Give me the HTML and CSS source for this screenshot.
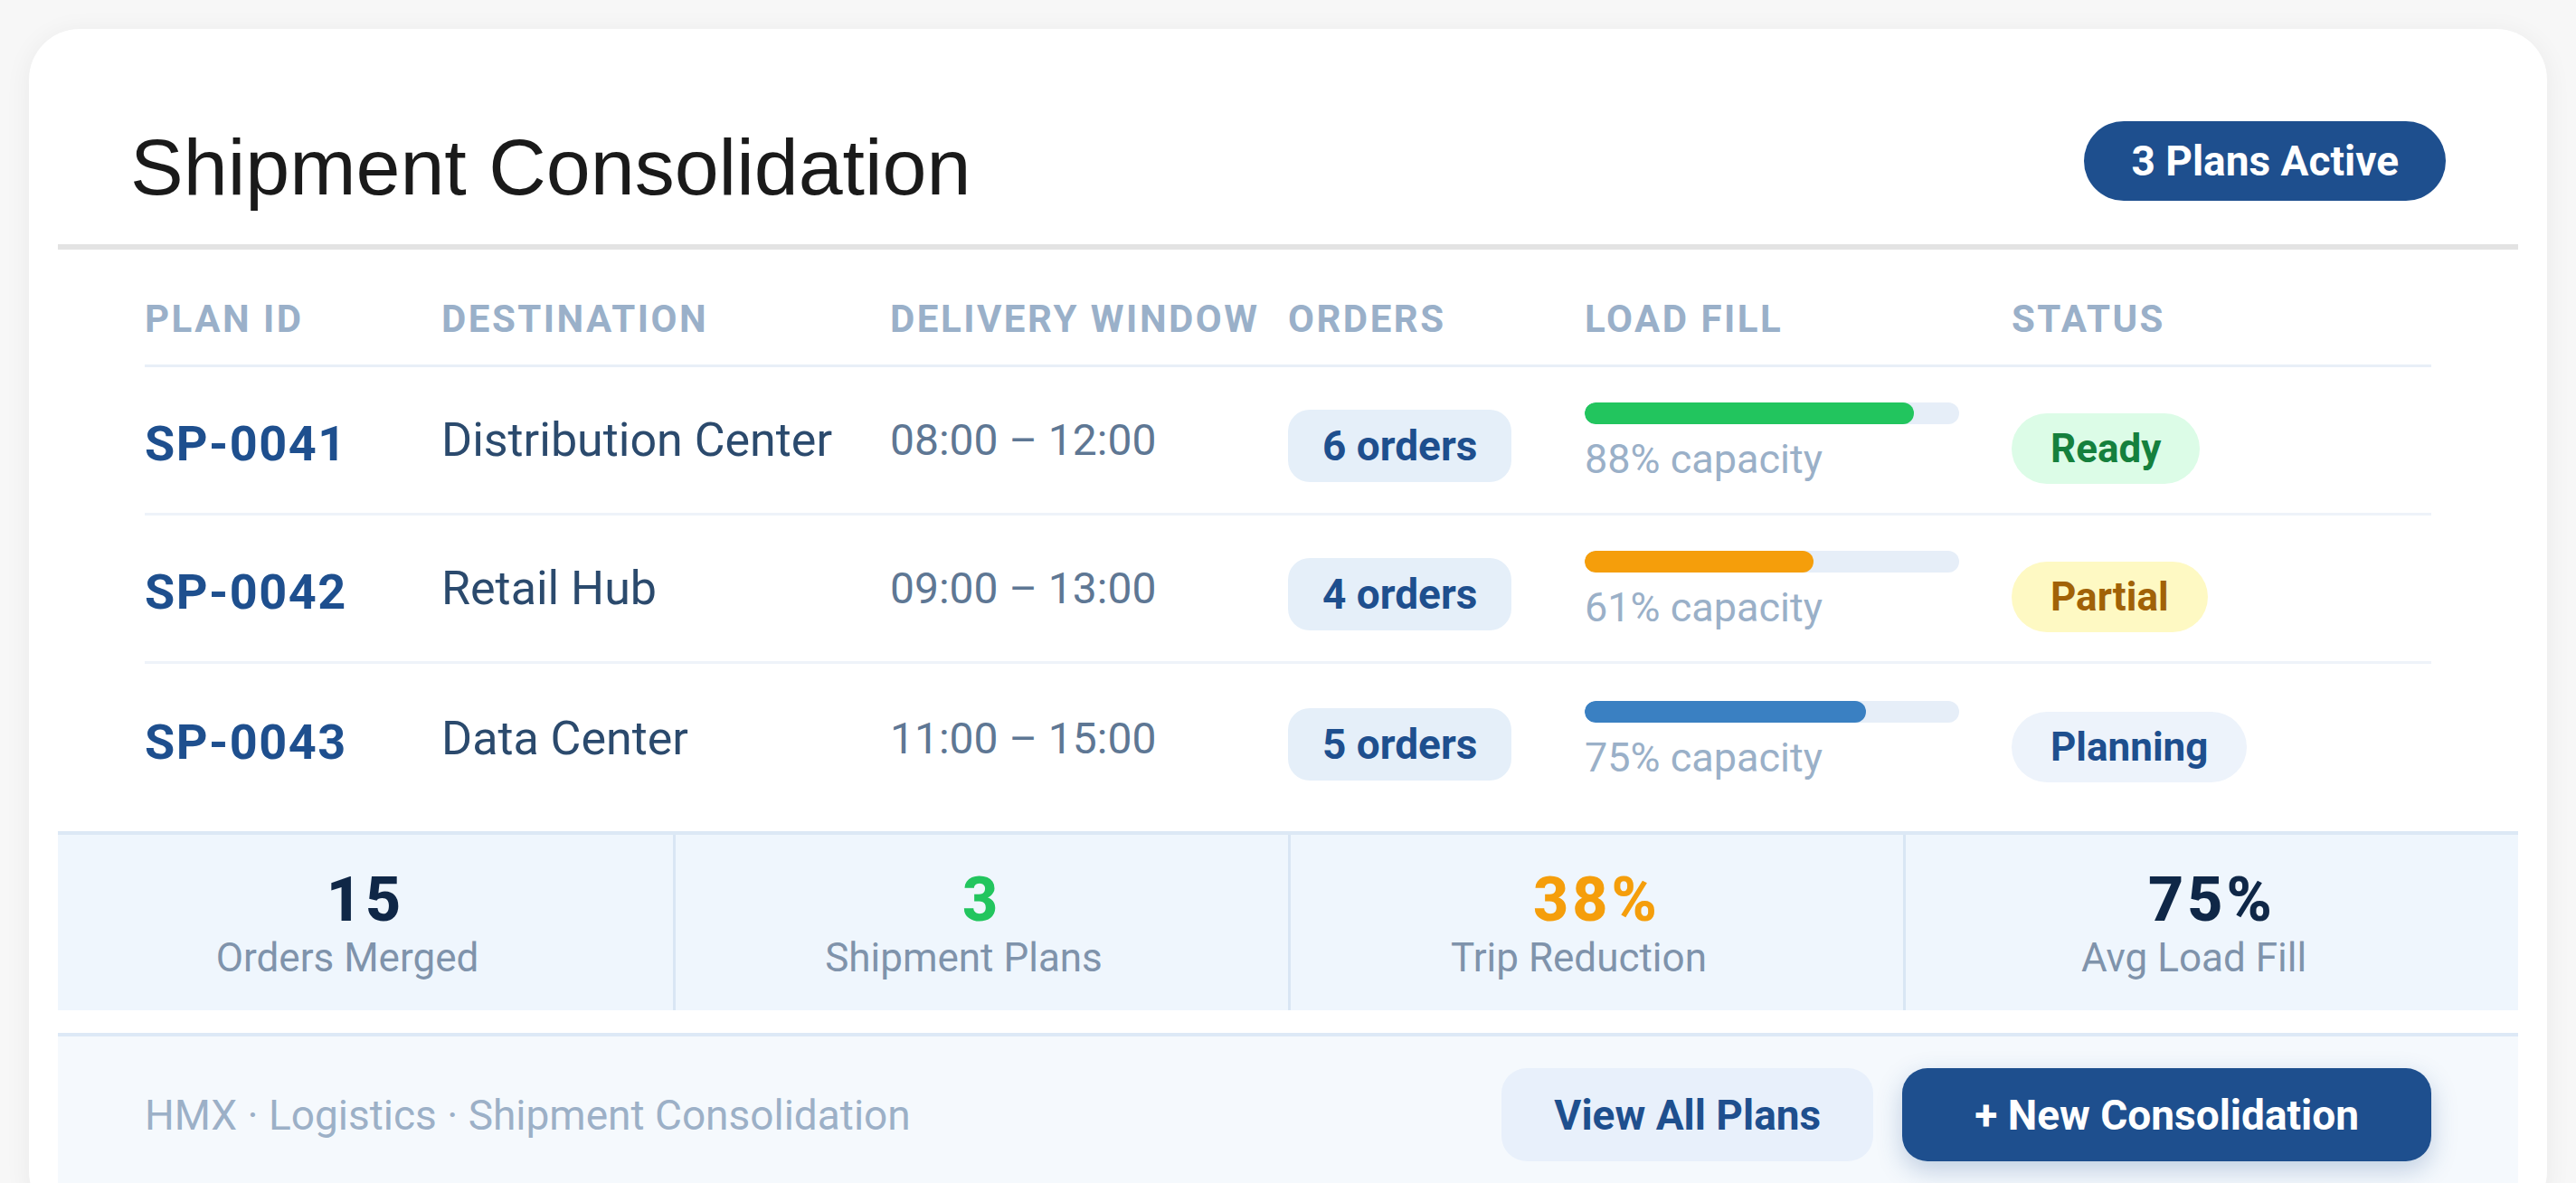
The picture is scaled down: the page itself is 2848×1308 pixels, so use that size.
FILE: index.html
```html
<!DOCTYPE html>
<html lang="en">
  <head>
    <meta charset="utf-8">
    <title>Shipment Consolidation</title>
    <link rel="stylesheet" href="styles.css">
  </head>
  <body>

  <div class="card">
    <header class="card-head">
      <h1 class="title">Shipment Consolidation</h1>
      <span class="badge">3 Plans Active</span>
    </header>

    <section class="plans">
      <table class="plan-table">
        <colgroup>
          <col class="c-id">
          <col class="c-dest">
          <col class="c-window">
          <col class="c-orders">
          <col class="c-load">
          <col class="c-status">
        </colgroup>
        <thead>
          <tr>
            <th>PLAN ID</th>
            <th>DESTINATION</th>
            <th>DELIVERY WINDOW</th>
            <th>ORDERS</th>
            <th>LOAD FILL</th>
            <th>STATUS</th>
          </tr>
        </thead>
        <tbody>
          <tr>
            <td class="plan-id">SP-0041</td>
            <td class="dest">Distribution Center</td>
            <td class="window">08:00 – 12:00</td>
            <td class="orders"><span class="orders-pill">6 orders</span></td>
            <td class="load">
              <div class="track"><div class="fill fill-green" style="width: 88%"></div></div>
              <div class="load-text">88% capacity</div>
            </td>
            <td class="status"><span class="pill pill-ready">Ready</span></td>
          </tr>
          <tr>
            <td class="plan-id">SP-0042</td>
            <td class="dest">Retail Hub</td>
            <td class="window">09:00 – 13:00</td>
            <td class="orders"><span class="orders-pill">4 orders</span></td>
            <td class="load">
              <div class="track"><div class="fill fill-amber" style="width: 61%"></div></div>
              <div class="load-text">61% capacity</div>
            </td>
            <td class="status"><span class="pill pill-partial">Partial</span></td>
          </tr>
          <tr>
            <td class="plan-id">SP-0043</td>
            <td class="dest">Data Center</td>
            <td class="window">11:00 – 15:00</td>
            <td class="orders"><span class="orders-pill">5 orders</span></td>
            <td class="load">
              <div class="track"><div class="fill fill-blue" style="width: 75%"></div></div>
              <div class="load-text">75% capacity</div>
            </td>
            <td class="status"><span class="pill pill-planning">Planning</span></td>
          </tr>
        </tbody>
      </table>
    </section>

    <section class="stats">
      <div class="stat">
        <div class="stat-num">15</div>
        <div class="stat-label">Orders Merged</div>
      </div>
      <div class="stat">
        <div class="stat-num green">3</div>
        <div class="stat-label">Shipment Plans</div>
      </div>
      <div class="stat">
        <div class="stat-num amber">38%</div>
        <div class="stat-label">Trip Reduction</div>
      </div>
      <div class="stat">
        <div class="stat-num">75%</div>
        <div class="stat-label">Avg Load Fill</div>
      </div>
    </section>

    <footer class="card-foot">
      <span class="crumbs">HMX · Logistics · Shipment Consolidation</span>
      <div class="actions">
        <button class="btn btn-ghost">View All Plans</button>
        <button class="btn btn-primary">+ New Consolidation</button>
      </div>
    </footer>
  </div>

  </body>
</html>
```

FILE: styles.css
```css
html {
  background: #f7f7f7;
}
body {
  margin: 0;
  padding: 32px;
  font-family: Roboto, "Noto Sans", sans-serif;
  color: #2b4a6d;
}

.card {
  background: #ffffff;
  border-radius: 56px;
  padding: 32px;
  box-shadow: 0 4px 30px rgba(0,0,0,0.06);
  overflow: hidden;
}

/* header */
.card-head {
  display: flex;
  justify-content: space-between;
  align-items: center;
  padding: 63px 80px 41px;
  border-bottom: 6px solid #e3e3e3;
}
.title {
  margin: 14px 0 0;
  font-family: "Liberation Sans", Arial, sans-serif;
  font-weight: 400;
  font-size: 88px;
  line-height: 88px;
  color: #1a1a1a;
}
.badge {
  display: flex;
  align-items: center;
  height: 88px;
  padding: 0 52px;
  border-radius: 44px;
  background: #1e4f8e;
  color: #ffffff;
  font-size: 46px;
  font-weight: 700;
}

/* table */
.plans {
  padding: 0 96px;
}
.plan-table {
  width: 100%;
  table-layout: fixed;
  border-collapse: separate;
  border-spacing: 0;
}
.c-id { width: 328px; }
.c-dest { width: 496px; }
.c-window { width: 440px; }
.c-orders { width: 328px; }
.c-load { width: 472px; }
.c-status { width: 464px; }

.plan-table th {
  text-align: left;
  padding: 52px 0 25px;
  line-height: 50px;
  font-size: 42px;
  font-weight: 700;
  letter-spacing: 2.5px;
  color: #9ab0c9;
  border-bottom: 3px solid #e8eff7;
}
.plan-table tbody tr {
  height: 164px;
}
.plan-table td {
  padding: 0;
  vertical-align: middle;
  border-bottom: 3px solid #eef3f9;
  white-space: nowrap;
}
.plan-table tbody tr:last-child td {
  border-bottom: none;
}

.plan-id {
  padding-top: 8px !important;
  font-size: 54px;
  font-weight: 700;
  letter-spacing: 1.5px;
  color: #1e4f8e;
}
.dest {
  font-size: 52px;
  color: #2b4a6d;
}
.window {
  font-size: 48px;
  color: #5e7794;
}

.orders {
  padding-top: 13px !important;
}
.orders-pill {
  display: inline-block;
  height: 80px;
  line-height: 80px;
  padding: 0 38px;
  border-radius: 24px;
  background: #e5eff9;
  color: #1e4f8e;
  font-size: 46px;
  font-weight: 700;
}

.load {
  padding-top: 6px !important;
}
.track {
  width: 414px;
  height: 24px;
  border-radius: 12px;
  background: #e6eef8;
  overflow: hidden;
}
.fill {
  height: 100%;
  border-radius: 12px;
}
.fill-green { background: #22c55e; }
.fill-amber { background: #f59e0b; }
.fill-blue { background: #3a80c2; }
.load-text {
  margin-top: 13px;
  font-size: 45px;
  line-height: 52px;
  color: #9ab0c8;
}

.status {
  padding-top: 19px !important;
}
.pill {
  display: inline-block;
  height: 78px;
  line-height: 78px;
  padding: 0 43px;
  border-radius: 39px;
  font-size: 44px;
  font-weight: 700;
}
.pill-ready {
  background: #dcfce7;
  color: #15803d;
}
.pill-partial {
  background: #fef9c3;
  color: #a16207;
}
.pill-planning {
  background: #edf3fb;
  color: #1e4f8e;
}

/* stats */
.stats {
  margin-top: 21px;
  display: grid;
  grid-template-columns: repeat(4, 1fr);
  background: #eff6fd;
  border-top: 4px solid #dce8f5;
}
.stat {
  text-align: center;
  padding: 36px 0 34px;
}
.stat + .stat {
  border-left: 3px solid #d9e6f4;
}
.stat-num {
  font-size: 68px;
  line-height: 72px;
  font-weight: 800;
  letter-spacing: 4px;
  color: #0f2747;
}
.stat-num.green { color: #22c55e; }
.stat-num.amber { color: #f59e0b; }
.stat-label {
  margin-top: 4px;
  padding-right: 40px;
  font-size: 44px;
  line-height: 48px;
  color: #7f93ab;
}

/* footer */
.card-foot {
  margin-top: 25px;
  display: flex;
  justify-content: space-between;
  align-items: center;
  padding: 35px 96px;
  background: #f5f9fd;
  border-top: 4px solid #dde9f6;
}
.crumbs {
  font-size: 46px;
  color: #9cb0c7;
}
.actions {
  display: flex;
  gap: 32px;
}
.btn {
  height: 103px;
  border: none;
  border-radius: 28px;
  font-family: Roboto, "Noto Sans", sans-serif;
  font-size: 46px;
  font-weight: 700;
  cursor: pointer;
}
.btn-ghost {
  padding: 0 58px;
  background: #e8f0fb;
  color: #1e4f8e;
}
.btn-primary {
  padding: 0 80px;
  background: #1e4f8e;
  color: #ffffff;
  box-shadow: 0 10px 28px rgba(30,79,142,0.25);
}
```
